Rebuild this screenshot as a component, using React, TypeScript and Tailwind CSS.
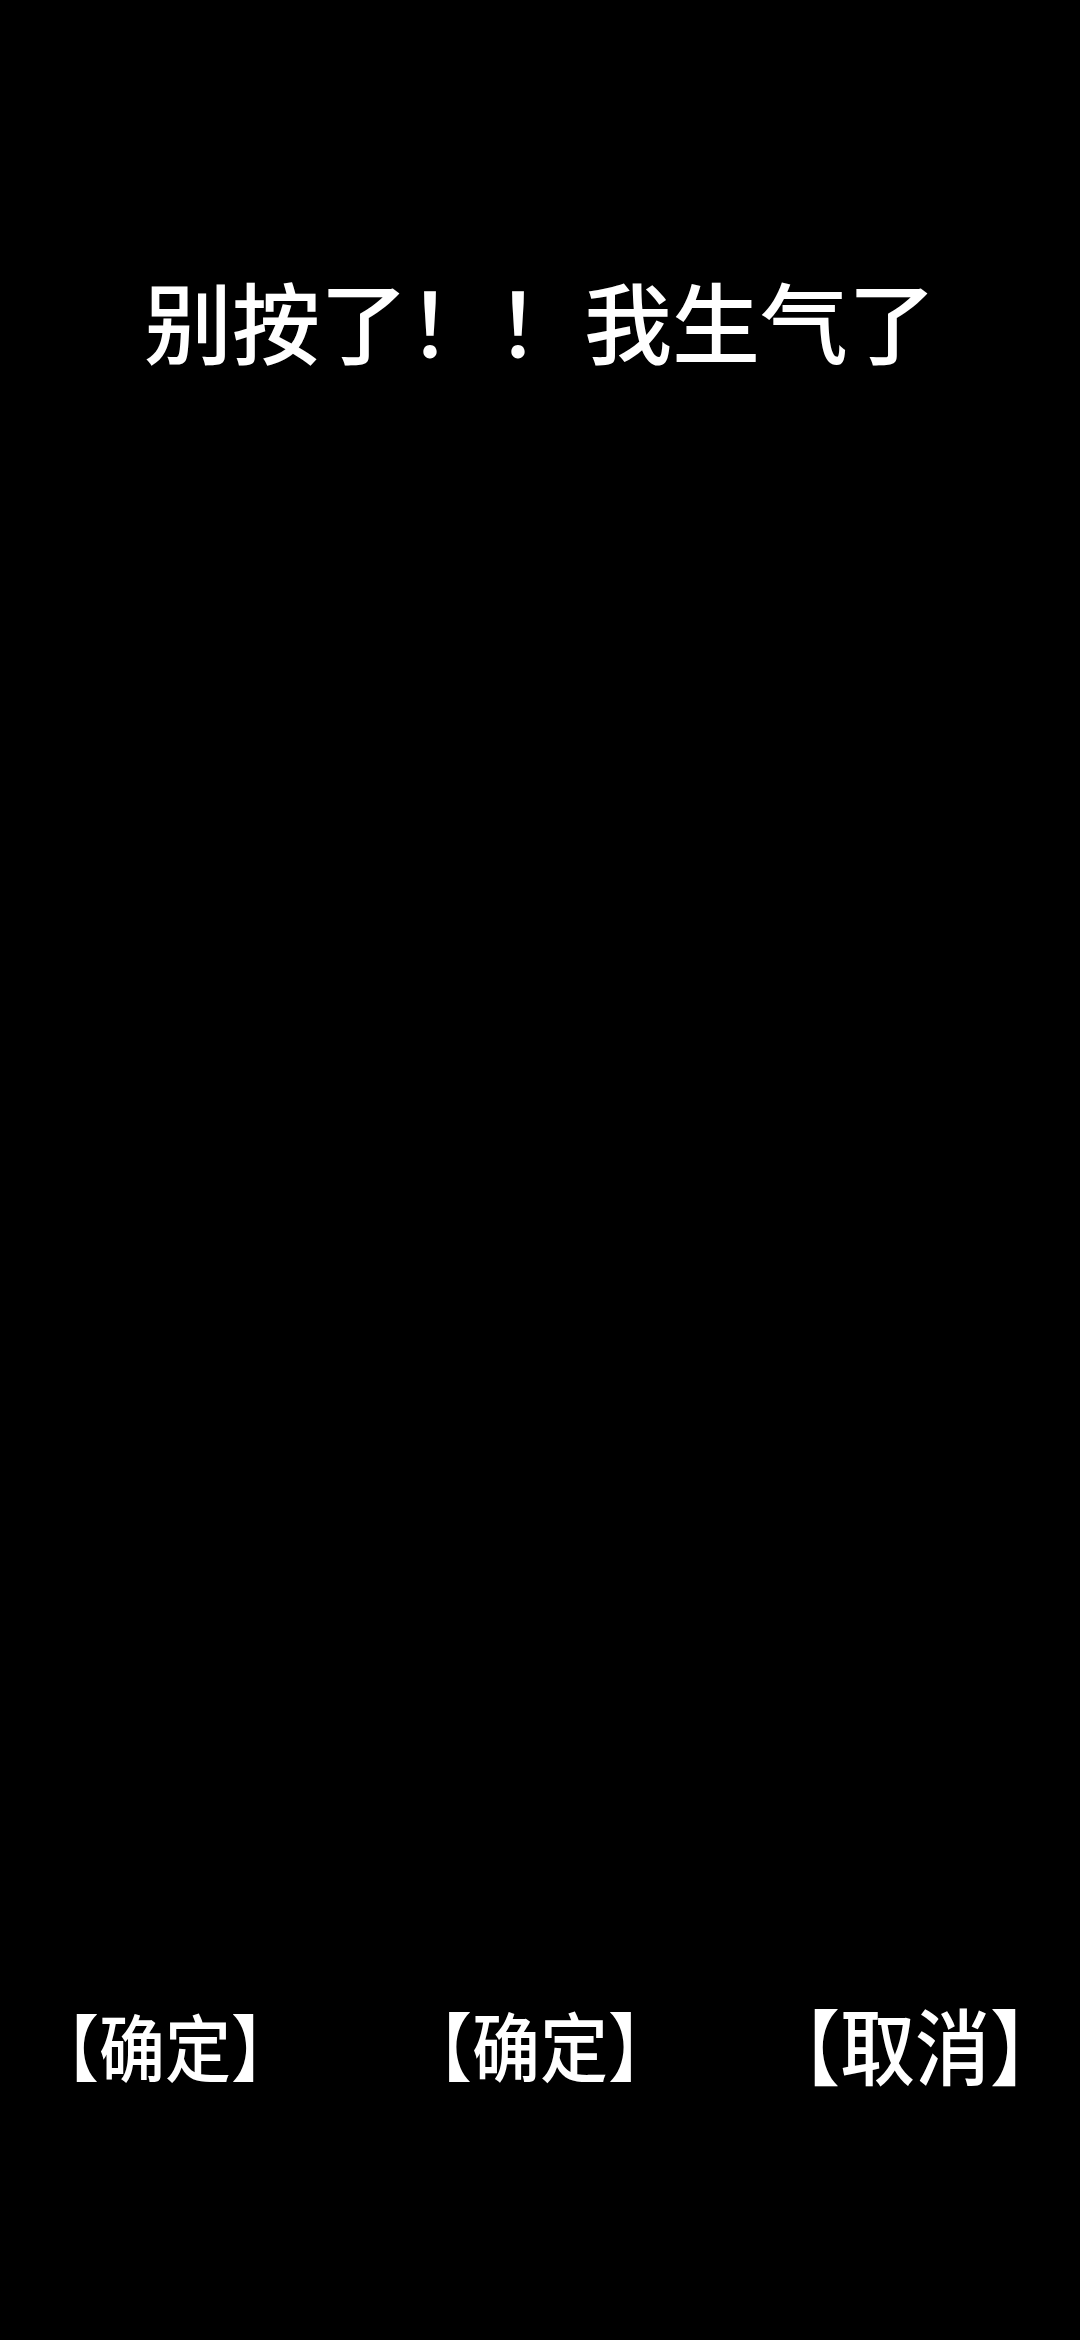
export default function App() {
  const font = {
    fontFamily: '"Noto Sans CJK SC", "Noto Sans", sans-serif',
  };
  return (
    <div
      className="flex min-h-screen flex-col bg-black text-white"
      style={font}
    >
      <h1 className="pt-[275px] text-center text-[88px] leading-none font-medium whitespace-nowrap">
        别按了！！我生气了
      </h1>
      <div className="flex-1" />
      <div className="flex justify-center gap-[75px] pb-[259px]">
        <button className="w-[300px] shrink-0 scale-y-[1.1] text-center text-[66px] leading-none font-medium whitespace-nowrap">
          【确定】
        </button>
        <button className="w-[300px] shrink-0 scale-y-[1.1] text-center text-[68px] leading-none font-medium whitespace-nowrap">
          【确定】
        </button>
        <button className="w-[300px] shrink-0 scale-y-[1.1] text-center text-[75px] leading-none font-medium whitespace-nowrap">
          【取消】
        </button>
      </div>
    </div>
  );
}
